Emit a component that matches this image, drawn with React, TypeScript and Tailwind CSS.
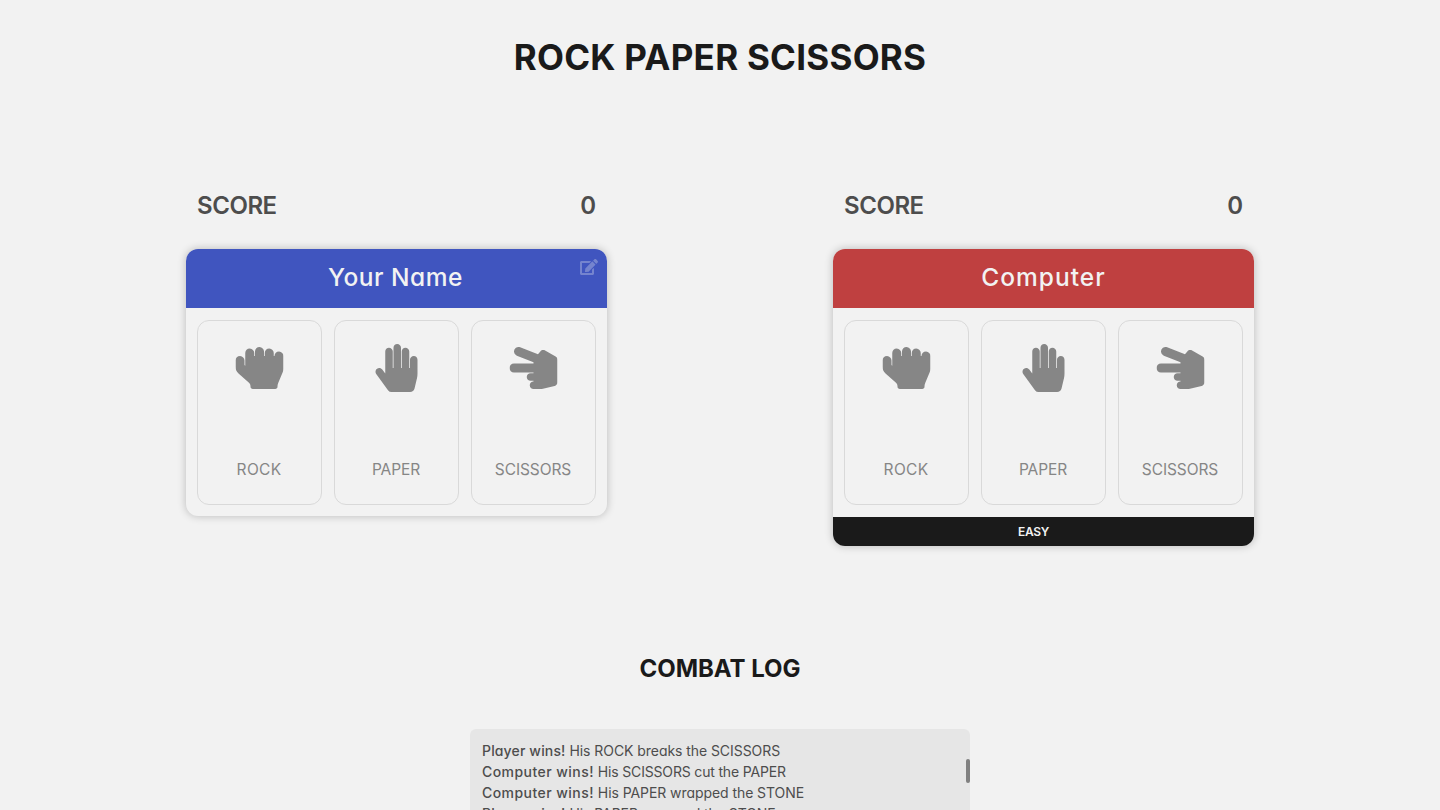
import { FaEdit, FaHandPaper, FaHandRock, FaHandScissors } from "react-icons/fa";

const moves = [
  { label: "ROCK", Icon: FaHandRock, text: "tracking-[0.3px]" },
  { label: "PAPER", Icon: FaHandPaper, text: "tracking-[-0.1px]" },
  { label: "SCISSORS", Icon: FaHandScissors, text: "tracking-[-0.1px]" },
];

const log = [
  { winner: "Player wins!", lead: "tracking-[0.15px]", detail: "His ROCK breaks the SCISSORS", tail: "tracking-[-0.06px]" },
  { winner: "Computer wins!", lead: "tracking-[0.45px]", detail: "His SCISSORS cut the PAPER", tail: "tracking-[-0.17px]" },
  { winner: "Computer wins!", lead: "tracking-[0.45px]", detail: "His PAPER wrapped the STONE", tail: "tracking-[-0.07px]" },
  { winner: "Player wins!", lead: "tracking-[0.15px]", detail: "His PAPER wrapped the STONE", tail: "tracking-[-0.07px]" },
];

function Fighter({ name, human = false }: { name: string; human?: boolean }) {
  return (
    <section className="flex w-[421px] flex-col">
      <div className="flex h-9 items-center justify-between px-[11px] text-2xl font-semibold text-[#4d4d4d]">
        <span className="tracking-[-0.45px]">SCORE</span>
        <span>0</span>
      </div>
      <div className="mt-[25px] overflow-hidden rounded-xl bg-[#f2f2f2] shadow-[0_0_8px_rgba(0,0,0,0.24)]">
        <header
          className={`relative flex h-[59px] items-center justify-center pb-0.5 text-[24.5px] font-medium text-[#f2f2f2] ${
            human ? "bg-[#4055bf] pr-0.5 tracking-[0.5px]" : "bg-[#bf4040] tracking-[1px]"
          }`}
        >
          <span>{name}</span>
          {human && <FaEdit className="absolute top-[9px] right-[9px] size-[18px] text-[#f2f2f2]/30" />}
        </header>
        <div className={`grid grid-cols-3 gap-3 px-[11px] pt-3 ${human ? "pb-[11px]" : "pb-3"}`}>
          {moves.map(({ label, Icon, text }) => (
            <button
              key={label}
              type="button"
              className="flex h-[185px] flex-col items-center justify-between rounded-xl border border-[#d9d9d9] pt-[23px] pr-px pb-[22px] text-[#868686]"
            >
              <Icon className="size-12 translate-x-[0.5px]" />
              <span className={`text-[15.5px] leading-6 ${text}`}>{label}</span>
            </button>
          ))}
        </div>
        {!human && (
          <footer className="flex h-[29px] items-center justify-center bg-[#1a1a1a] pr-5 text-xs font-semibold tracking-[-0.3px] text-[#f2f2f2]">
            EASY
          </footer>
        )}
      </div>
    </section>
  );
}

export default function App() {
  return (
    <main className="flex h-[810px] flex-col items-center overflow-hidden bg-[#f2f2f2] pt-[30px] font-['Inter',sans-serif] text-[#1a1a1a] [font-feature-settings:'cv11']">
      <h1 className="text-[35px] leading-[54px] font-bold tracking-[0.25px]">ROCK PAPER SCISSORS</h1>
      <div className="mt-[104px] flex h-[358px] w-[1068px] items-start justify-between">
        <Fighter name="Your Name" human />
        <Fighter name="Computer" />
      </div>
      <h2 className="mt-[105px] text-2xl leading-9 font-bold tracking-[-0.05px]">COMBAT LOG</h2>
      <div className="relative mt-[42px] h-[120px] w-[500px] shrink-0 rounded-md bg-[#e6e6e6] px-3 pt-[11px] text-sm leading-[21px] text-[#4d4d4d]">
        {log.map(({ winner, lead, detail, tail }, i) => (
          <p key={i}>
            <span className={`font-medium ${lead}`}>{winner}</span> <span className={tail}>{detail}</span>
          </p>
        ))}
        <div className="absolute top-[30px] right-0 h-6 w-1 rounded-xs bg-[#808080]" />
      </div>
    </main>
  );
}
